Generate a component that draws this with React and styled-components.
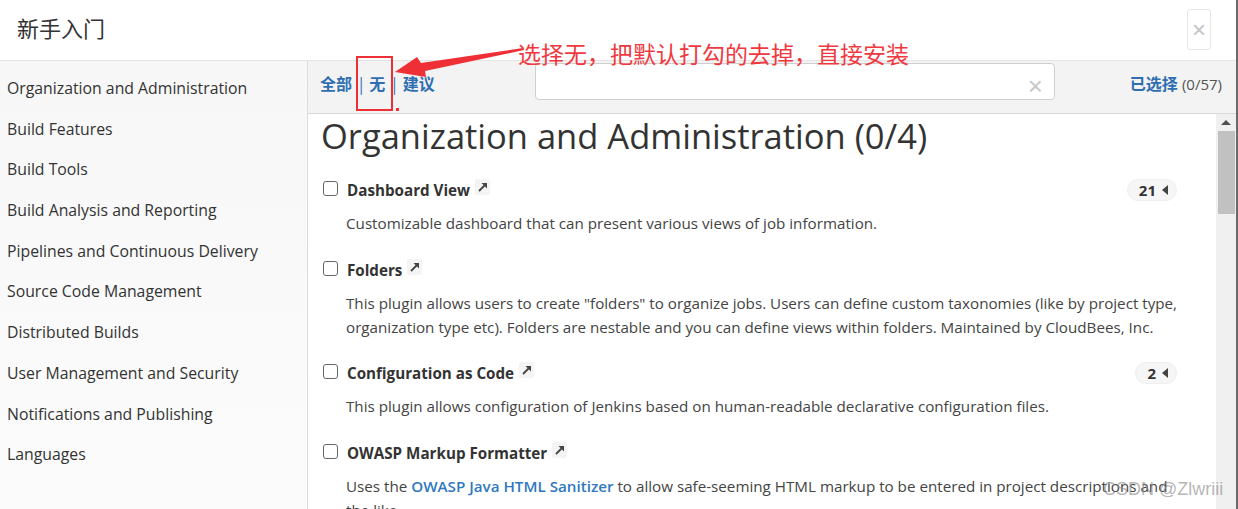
import React from 'react'
import styled, { createGlobalStyle } from 'styled-components'

const categories = [
  'Organization and Administration',
  'Build Features',
  'Build Tools',
  'Build Analysis and Reporting',
  'Pipelines and Continuous Delivery',
  'Source Code Management',
  'Distributed Builds',
  'User Management and Security',
  'Notifications and Publishing',
  'Languages',
]

function ExternalIcon() {
  return (
    <IconBox>
      <svg width="10" height="10" viewBox="0 0 10 10">
        <line x1="1" y1="9" x2="6.5" y2="3.5" stroke="#444" strokeWidth="1.8" />
        <polygon points="3.5,1 9,1 9,6.5" fill="#444" />
      </svg>
    </IconBox>
  )
}

function Plugin({ name, count, children }) {
  return (
    <PluginItem>
      <PluginRow>
        <PluginTitle>
          <Check />
          <PluginName>{name}</PluginName>
          <ExternalIcon />
        </PluginTitle>
        {count && (
          <Badge>
            {count}
            <Caret />
          </Badge>
        )}
      </PluginRow>
      <Description>{children}</Description>
    </PluginItem>
  )
}

function App() {
  return (
    <>
      <GlobalStyle />
      <Modal>
        <Header>
          <Title>新手入门</Title>
          <CloseButton>×</CloseButton>
        </Header>
        <Body>
          <Sidebar>
            {categories.map((c) => (
              <Category key={c}>{c}</Category>
            ))}
          </Sidebar>
          <Main>
            <Toolbar>
              <Filters>
                <FilterLink>全部</FilterLink>
                <Sep>|</Sep>
                <FilterLink>无</FilterLink>
                <Sep>|</Sep>
                <FilterLink>建议</FilterLink>
              </Filters>
              <Search>
                <ClearX>×</ClearX>
              </Search>
              <Selected>
                <FilterLink>已选择</FilterLink> <Count>(0/57)</Count>
              </Selected>
            </Toolbar>
            <Content>
              <Scroll>
                <Heading>Organization and Administration (0/4)</Heading>
                <Plugin name="Dashboard View" count="21">
                  Customizable dashboard that can present various views of job information.
                </Plugin>
                <Plugin name="Folders">
                  This plugin allows users to create "folders" to organize jobs. Users can define custom taxonomies (like by project type, organization type etc). Folders are nestable and you can define views within folders. Maintained by CloudBees, Inc.
                </Plugin>
                <Plugin name="Configuration as Code" count="2">
                  This plugin allows configuration of Jenkins based on human-readable declarative configuration files.
                </Plugin>
                <Plugin name="OWASP Markup Formatter">
                  Uses the <InlineLink>OWASP Java HTML Sanitizer</InlineLink> to allow safe-seeming HTML markup to be entered in project descriptions and the like.
                </Plugin>
              </Scroll>
              <Scrollbar>
                <ScrollArrow />
                <Thumb />
              </Scrollbar>
            </Content>
          </Main>
        </Body>

        <Highlight />
        <Dot />
        <Pointer width="130" height="40" viewBox="0 0 130 40">
          <polygon points="128,2 129,4 30,25 31,31 0,26 22,11 26,17" fill="#ee2f36" />
        </Pointer>
        <Note>选择无，把默认打勾的去掉，直接安装</Note>
        <Watermark>CSDN @Zlwriii</Watermark>
      </Modal>
    </>
  )
}

export default App

const GlobalStyle = createGlobalStyle`
  body {
    margin: 0;
    background: #fff;
    font-family: "Open Sans", "Noto Sans CJK SC", sans-serif;
  }
`

const Modal = styled.div`
  position: relative;
  width: 1238px;
  height: 509px;
  overflow: hidden;
  box-sizing: border-box;
  border-right: 2px solid #6a6a6a;
  background: #fff;
  display: flex;
  flex-direction: column;
`

const Header = styled.div`
  height: 60px;
  flex-shrink: 0;
  display: flex;
  align-items: center;
  justify-content: space-between;
  padding: 0 25px 0 17px;
  border-bottom: 1px solid #e5e5e5;
`

const Title = styled.div`
  font-family: "Noto Sans CJK SC", sans-serif;
  font-size: 22px;
  color: #333;
  margin-top: -7px;
`

const CloseButton = styled.div`
  width: 22px;
  height: 39px;
  margin-top: -1px;
  border: 1px solid #e6e6e6;
  border-radius: 3px;
  display: flex;
  align-items: center;
  justify-content: center;
  font-family: "Liberation Sans", sans-serif;
  font-size: 24px;
  color: #c4c4c4;
`

const Body = styled.div`
  flex: 1;
  display: flex;
  min-height: 0;
`

const Sidebar = styled.div`
  width: 308px;
  flex-shrink: 0;
  border-right: 1px solid #dcdcdc;
  background: linear-gradient(#f7f7f7, #fbfbfb);
  padding-top: 7px;
  box-sizing: border-box;
`

const Category = styled.div`
  height: 40.7px;
  line-height: 40.7px;
  padding-left: 7px;
  font-size: 15.8px;
  font-weight: 500;
  color: #333;
  white-space: nowrap;
`

const Main = styled.div`
  flex: 1;
  display: flex;
  flex-direction: column;
  min-width: 0;
`

const Toolbar = styled.div`
  height: 53px;
  flex-shrink: 0;
  box-sizing: border-box;
  border-bottom: 1px solid #d9d9d9;
  background: #f3f3f3;
  display: grid;
  grid-template-columns: 215px 520px 1fr;
  align-items: start;
  padding: 2px 14px 0 12px;
`

const Filters = styled.div`
  line-height: 40px;
  font-family: "Noto Sans CJK SC", sans-serif;
  font-size: 16px;
  white-space: nowrap;
`

const FilterLink = styled.span`
  font-family: "Noto Sans CJK SC", sans-serif;
  font-weight: 700;
  color: #2f6fb0;
`

const Sep = styled.span`
  color: #2f6fb0;
  margin: 0 6px 0 7px;
`

const Search = styled.div`
  height: 37px;
  box-sizing: border-box;
  border: 1px solid #cfcfcf;
  border-radius: 4px;
  background: #fff;
  display: flex;
  align-items: center;
  justify-content: flex-end;
  padding-right: 11px;
`

const ClearX = styled.span`
  font-family: "Liberation Sans", sans-serif;
  font-size: 26px;
  line-height: 1;
  color: #c8c8c8;
  margin-top: 8px;
`

const Selected = styled.div`
  justify-self: end;
  line-height: 40px;
  font-size: 16px;
  white-space: nowrap;
`

const Count = styled.span`
  font-size: 15px;
  color: #555;
`

const Content = styled.div`
  flex: 1;
  display: flex;
  min-height: 0;
  overflow: hidden;
`

const Scroll = styled.div`
  flex: 1;
  padding: 2px 39px 0 13px;
  color: #333;
`

const Heading = styled.h1`
  margin: 0 0 23px;
  font-size: 34.5px;
  font-weight: 400;
  line-height: 40px;
  color: #333;
  white-space: nowrap;
`

const PluginItem = styled.div`
  margin-bottom: 23.5px;
`

const PluginRow = styled.div`
  display: flex;
  align-items: center;
  justify-content: space-between;
  height: 22px;
`

const PluginTitle = styled.div`
  display: flex;
  align-items: center;
`

const Check = styled.span`
  width: 13px;
  height: 13px;
  border: 1px solid #666;
  border-radius: 3px;
  background: #fff;
  margin: -3px 9px 0 2px;
`

const PluginName = styled.span`
  font-size: 15.2px;
  font-weight: 700;
  color: #333;
`

const IconBox = styled.span`
  display: inline-flex;
  align-items: center;
  justify-content: center;
  width: 15px;
  height: 16px;
  margin: -6px 0 0 5px;
  background: #f4f4f4;
  border-radius: 2px;
`

const Badge = styled.span`
  display: inline-flex;
  align-items: center;
  gap: 6px;
  height: 22px;
  box-sizing: border-box;
  padding: 0 8px 0 11px;
  border: 1px solid #efefef;
  border-radius: 11px;
  background: #f6f6f6;
  font-size: 15px;
  font-weight: 700;
  color: #333;
`

const Caret = styled.span`
  width: 0;
  height: 0;
  border-top: 5px solid transparent;
  border-bottom: 5px solid transparent;
  border-right: 6px solid #444;
`

const Description = styled.div`
  margin: 10px -10px 0 25px;
  font-size: 15.2px;
  line-height: 24px;
  color: #444;
`

const InlineLink = styled.span`
  color: #2f78c0;
  font-weight: 600;
`

const Scrollbar = styled.div`
  width: 20px;
  flex-shrink: 0;
  background: #f0f0f0;
  display: flex;
  flex-direction: column;
  align-items: center;
`

const ScrollArrow = styled.span`
  width: 0;
  height: 0;
  margin-top: 6px;
  border-left: 5px solid transparent;
  border-right: 5px solid transparent;
  border-bottom: 5px solid #505050;
`

const Thumb = styled.div`
  width: 17px;
  height: 83px;
  margin-top: 6px;
  background: #c1c1c1;
`

const Highlight = styled.div`
  position: absolute;
  left: 356px;
  top: 56px;
  width: 37px;
  height: 55px;
  box-sizing: border-box;
  border: 2px solid #ee2f36;
`

const Dot = styled.div`
  position: absolute;
  left: 396px;
  top: 108px;
  width: 3px;
  height: 3px;
  background: #ee2f36;
`

const Pointer = styled.svg`
  position: absolute;
  left: 395px;
  top: 46px;
`

const Note = styled.div`
  position: absolute;
  left: 518px;
  top: 37px;
  font-family: "Noto Sans CJK SC", sans-serif;
  font-size: 23px;
  line-height: 32px;
  color: #f0393f;
  white-space: nowrap;
`

const Watermark = styled.div`
  position: absolute;
  left: 1103px;
  top: 479px;
  font-family: "Liberation Sans", sans-serif;
  font-size: 18px;
  color: rgba(140, 140, 140, 0.65);
  white-space: nowrap;
`
